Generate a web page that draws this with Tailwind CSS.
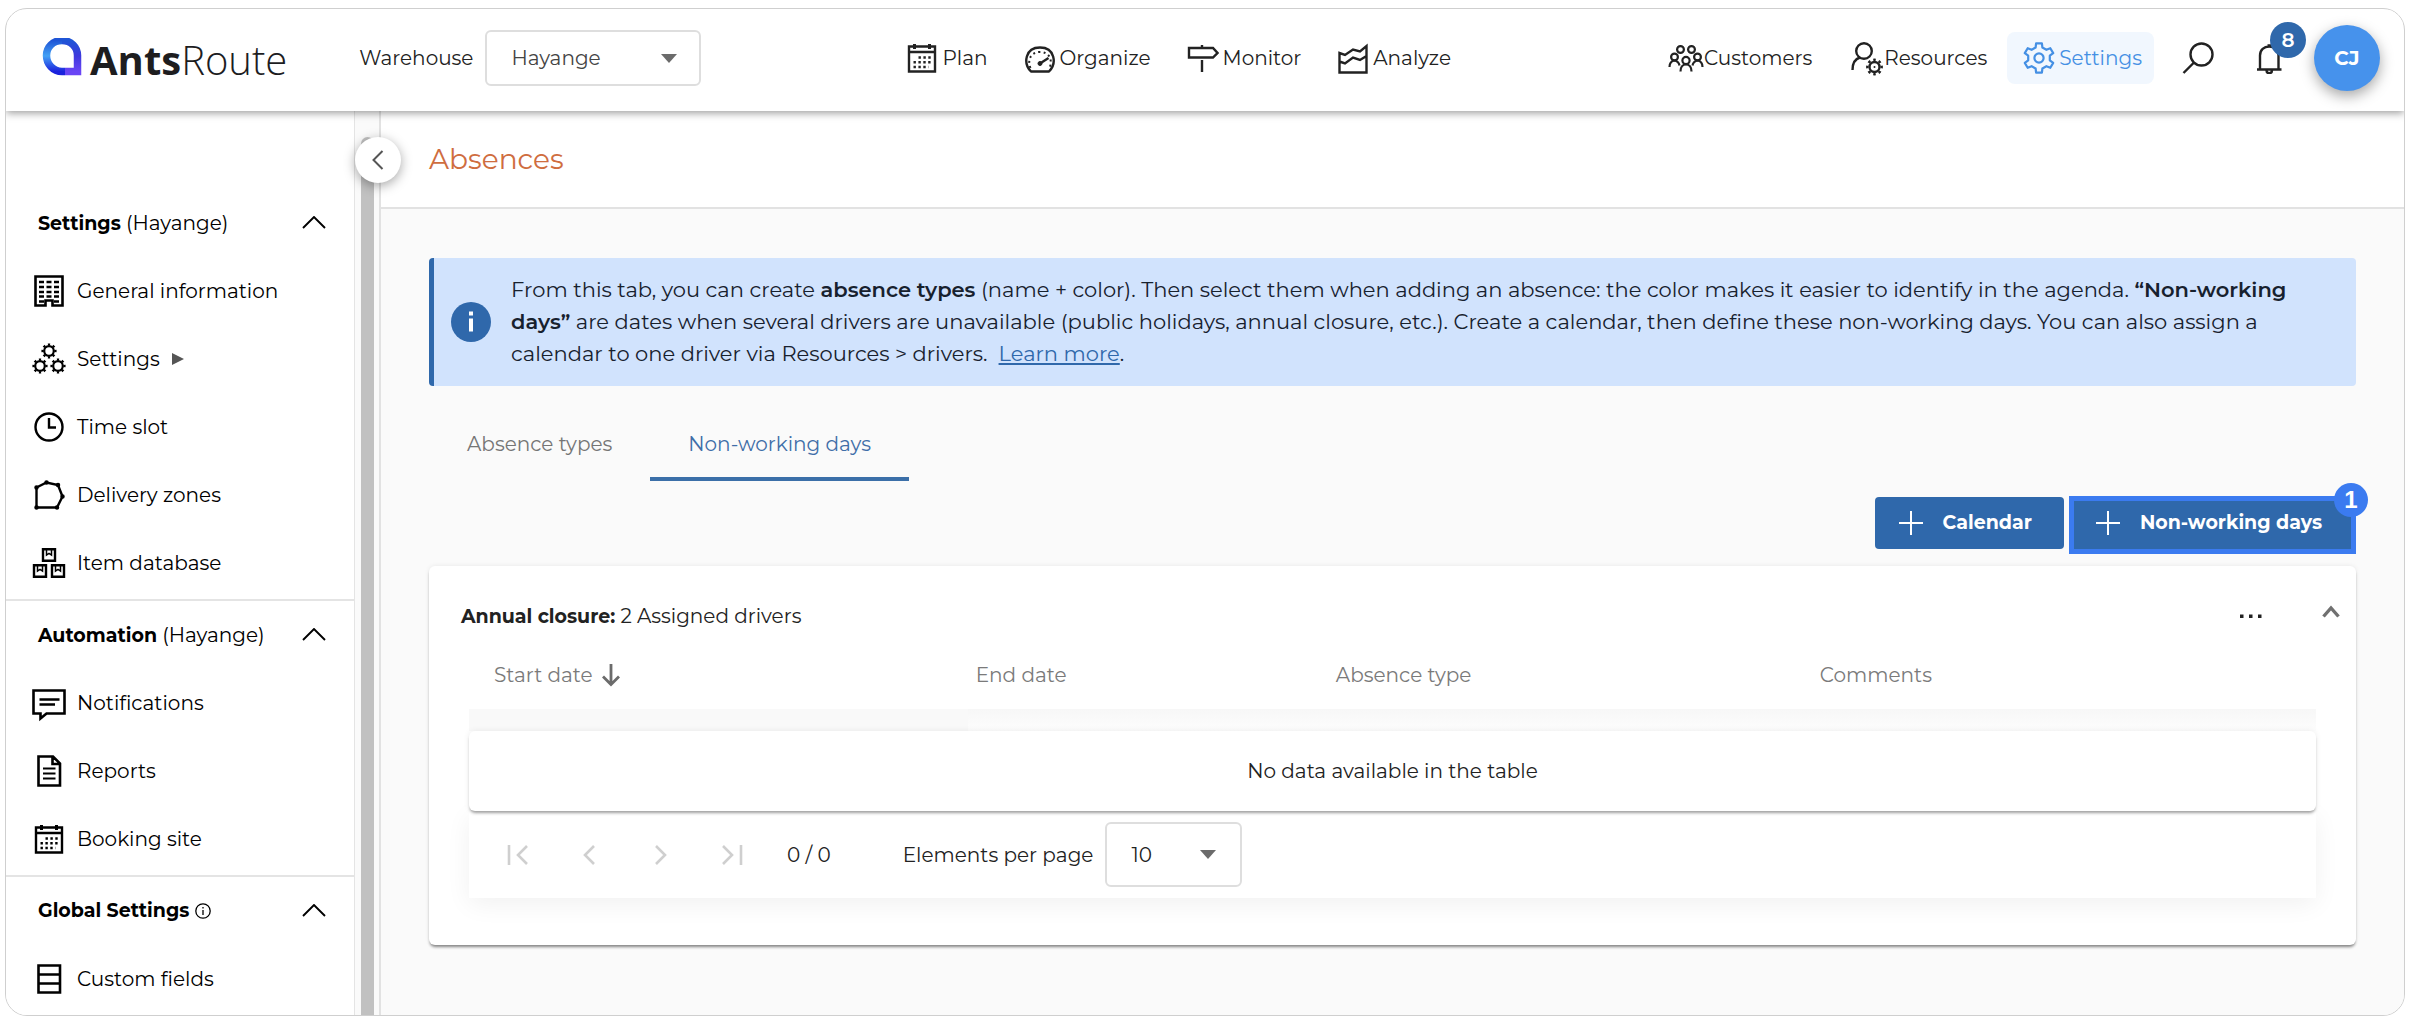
<!DOCTYPE html>
<html lang="en">
  <head>
    <meta charset="utf-8">
    <meta name="viewport" content="width=device-width, initial-scale=1">
    <title>AntsRoute - Absences</title>
    <!-- Tailwind CSS -->
    <script src="https://cdn.jsdelivr.net/npm/@tailwindcss/browser@4"></script>
  </head>
  <body class="bg-white font-['Montserrat','Inter',sans-serif] text-[20px] leading-7 text-[#222]">
    <!-- Shared icons -->
    <svg class="hidden">
      <symbol id="calendar" viewBox="0 0 32 32">
        <path d="M3 4.500H29V29.500H3ZM3 10H29" fill="none" stroke="currentColor" stroke-width="2.400"/>
        <path d="M8.500 2v5M23.500 2v5" stroke="currentColor" stroke-width="3"/>
        <path d="M12.500 15.500H27M7.500 20.300H27M7.500 25H22.500" stroke="currentColor" stroke-width="2.400" stroke-dasharray="2.400 2.500"/>
      </symbol>
      <symbol id="cog" viewBox="0 0 16 16">
        <circle cx="8" cy="8" r="4.800" fill="none" stroke="currentColor" stroke-width="2.200"/>
        <circle cx="8" cy="8" r="6.500" fill="none" stroke="currentColor" stroke-width="2.200" pathLength="16" stroke-dasharray="0.900 1.100" stroke-dashoffset="0.450"/>
      </symbol>
      <symbol id="box" viewBox="0 0 16 16">
        <path d="M2 2.200H14V13.800H2Z" fill="none" stroke="currentColor" stroke-width="2.400"/>
        <path d="M5.500 2.500V8L8 6.300 10.500 8V2.500" fill="none" stroke="currentColor" stroke-width="1.500"/>
      </symbol>
      <symbol id="chevron-up" viewBox="0 0 24 14">
        <path d="M1 12 12 1 23 12" fill="none" stroke="currentColor" stroke-width="1.900"/>
      </symbol>
      <symbol id="caret" viewBox="0 0 16 9">
        <path d="M0 0H16L8 9Z" fill="currentColor"/>
      </symbol>
    </svg>

    <div class="h-screen px-[5px] py-2">
      <div class="flex h-full flex-col overflow-hidden rounded-[22px] border border-[#cfcfcf]">

        <!-- Top bar -->
        <header class="relative z-20 flex h-[102px] shrink-0 items-center justify-between bg-white pr-6 pb-1 pl-9 shadow-[0_2px_8px_rgba(0,0,0,0.4)]">
          <div class="flex items-center">
            <a href="#" class="flex items-center gap-2 font-['Open_Sans',sans-serif] text-[40px] leading-10 text-[#1d1d1f]">
              <svg class="size-10" viewBox="0 3 40 40" fill="none" stroke-width="7.500">
                <defs>
                  <linearGradient id="lg1" x1="0" y1="0" x2="0" y2="1"><stop offset="0" stop-color="#1f55d6"/><stop offset=".5" stop-color="#44a2f5"/><stop offset="1" stop-color="#1b22dd"/></linearGradient>
                  <linearGradient id="lg2" x1="0" y1="0" x2="0" y2="1"><stop offset="0" stop-color="#1f55d6"/><stop offset=".5" stop-color="#3d38dd"/><stop offset="1" stop-color="#6a45f5"/></linearGradient>
                </defs>
                <path d="M20 5.500C11 5.500 4.500 12 4.500 20.500S11 36.500 20 36.500H23" stroke="url(#lg1)"/>
                <path d="M20 5.500C29 5.500 35.500 12 35.500 20.500V36.500H23" stroke="url(#lg2)"/>
              </svg>
              <span class="pt-1"><b>Ants</b><span class="font-light">Route</span></span>
            </a>
            <label for="warehouse" class="ml-18">Warehouse</label>
            <div class="relative ml-3">
              <select id="warehouse" class="h-14 w-[216px] appearance-none rounded-md border-2 border-[#dedede] bg-white pl-6 text-[#444]">
                <option>Hayange</option>
              </select>
              <svg class="pointer-events-none absolute top-6 right-6 h-[9px] w-4 text-[#6b6b6b]"><use href="#caret"/></svg>
            </div>
          </div>

          <nav class="mr-3 flex items-center gap-9">
            <a href="#" class="flex items-center gap-1">
              <svg class="size-8"><use href="#calendar"/></svg>
              Plan
            </a>
            <a href="#" class="flex items-center gap-1">
              <svg class="size-8" viewBox="0 0 32 32" fill="none" stroke="currentColor">
                <path d="M7 29.500C-1 21.500 1 5.500 16 5.500S33 21.500 25 29.500Z" stroke-width="2.400" stroke-linejoin="round"/>
                <path d="M6.500 26C3 17.500 7 10 16 10S29 17.500 25.500 26" stroke-width="2" stroke-dasharray="2 3.200"/>
                <path d="M16 21.500 24.500 16" stroke-width="2.400"/>
                <circle cx="16" cy="21.500" r="2" fill="currentColor"/>
              </svg>
              Organize
            </a>
            <a href="#" class="flex items-center gap-1">
              <svg class="size-8" viewBox="0 0 32 32" fill="none" stroke="currentColor" stroke-width="2.400">
                <path d="M2 6H26L30.500 11 26 15.500H2ZM15 3v3M15 18V30"/>
              </svg>
              Monitor
            </a>
            <a href="#" class="flex items-center gap-1">
              <svg class="size-8" viewBox="0 0 32 32" fill="none" stroke="currentColor" stroke-width="2.400">
                <path d="M2.500 30.500V11L8 13 16 7.500 23 9.500 29.500 4V30.500ZM2.500 19.500 8 21.500 16 15.500 23 18 29.500 14"/>
              </svg>
              Analyze
            </a>
          </nav>

          <div class="flex items-center">
            <a href="#" class="flex items-center">
              <svg class="h-8 w-9" viewBox="0 0 36 32" fill="none" stroke="currentColor" stroke-width="2.200">
                <circle cx="12.500" cy="7.500" r="3.400"/><circle cx="23.500" cy="7.500" r="3.400"/>
                <circle cx="6.500" cy="15" r="3.400"/><circle cx="29.500" cy="15" r="3.400"/>
                <circle cx="18" cy="18.500" r="3.600"/>
                <path d="M1.500 25C1.500 21 3.500 19 6.500 18.500 9 19 11 20.500 11.500 23.500M34.500 25C34.500 21 32.500 19 29.500 18.500 27 19 25 20.500 24.500 23.500M12.500 29.500C12.500 25.500 14.500 22.500 18 22.500S23.500 25.500 23.500 29.500"/>
              </svg>
              Customers
            </a>
            <a href="#" class="ml-9 flex items-center">
              <svg class="size-9" viewBox="0 0 36 36" fill="none" stroke="currentColor" stroke-width="2.400">
                <circle cx="16" cy="11" r="7.800"/>
                <path d="M4.500 30C4.500 24 7 19 12 17.500"/>
                <circle cx="26.500" cy="27" r="5"/>
                <circle cx="26.500" cy="27" r="7.200" pathLength="16" stroke-dasharray="0.900 1.100" stroke-dashoffset="0.450"/>
                <circle cx="26.500" cy="27" r="1" fill="currentColor" stroke="none"/>
              </svg>
              Resources
            </a>
            <a href="#" class="ml-5 flex h-[52px] items-center rounded-lg bg-[#f1f7fe] px-3 text-[#4590e4]">
              <svg class="h-8 w-10" viewBox="-20 -16 40 32" fill="none" stroke="currentColor" stroke-width="2.200" stroke-linejoin="round">
                <path d="M-2.900-14.700H2.900L3.400-10.500 7.400-8.200 11.300-9.800 14.200-4.900 10.800-2.300V2.300L14.200 4.900 11.300 9.800 7.400 8.200 3.400 10.500 2.900 14.700H-2.900L-3.400 10.500-7.400 8.200-11.300 9.800-14.200 4.900-10.800 2.300V-2.300L-14.200-4.900-11.300-9.800-7.400-8.200-3.400-10.500Z"/>
                <circle r="4.600"/>
              </svg>
              Settings
            </a>
            <button type="button" aria-label="Search" class="ml-7">
              <svg class="size-8" viewBox="0 0 32 32" fill="none" stroke="currentColor" stroke-width="2.400">
                <circle cx="19.500" cy="12.500" r="11"/><path d="M12 20.500 1.500 31"/>
              </svg>
            </button>
            <button type="button" aria-label="Notifications" class="relative ml-10">
              <svg class="size-8" viewBox="0 0 32 32" fill="none" stroke="currentColor" stroke-width="2.400">
                <path d="M3 27.500H27.500M6 27V13.500C6 8 10 4.500 15.200 4.500S24.500 8 24.500 13.500V27M12.500 28.500C12.500 32 18 32 18 28.500M13.500 3.500H17"/>
              </svg>
              <span class="absolute -top-5 left-4 flex size-9 items-center justify-center rounded-full bg-[#2f68ab] font-semibold text-white">8</span>
            </button>
            <button type="button" class="ml-7 flex size-[66px] items-center justify-center rounded-full bg-[#4692ec] font-bold text-white shadow-[0_5px_14px_rgba(0,0,0,0.35)]">CJ</button>
          </div>
        </header>

        <div class="relative flex min-h-0 flex-1">
          <!-- Sidebar -->
          <aside class="w-[349px] shrink-0 overflow-hidden border-r border-[#e4e4e4] bg-white pt-[78px] text-black">
            <section class="border-b-2 border-[#e4e4e4] pb-0.5">
              <h2 class="flex h-[68px] items-center justify-between pr-7 pl-8">
                <span><b class="text-[19px] font-bold">Settings</b> (Hayange)</span>
                <button type="button" aria-label="Collapse Settings"><svg class="h-3.5 w-6"><use href="#chevron-up"/></svg></button>
              </h2>
              <a href="#" class="flex h-[68px] items-center gap-3 pl-[27px]">
                <svg class="size-8" viewBox="0 0 32 32" fill="none" stroke="currentColor">
                  <path d="M2.500 1.500H29.500V30.500H19.500V25.500H12.500V30.500H2.500Z" stroke-width="2.600"/>
                  <path d="M6 7H27M6 12H27M6 17H27M6 21.500H27M6 26.500H11M21 26.500H27" stroke-width="2.400" stroke-dasharray="5 2.500"/>
                </svg>
                General information
              </a>
              <a href="#" class="flex h-[68px] items-center gap-3 pl-[27px]">
                <svg class="size-8 overflow-visible" viewBox="0 0 32 32">
                  <use href="#cog" x="8" y="0" width="16" height="16"/>
                  <use href="#cog" x="-1" y="15" width="16" height="16"/>
                  <use href="#cog" x="17" y="15" width="16" height="16"/>
                </svg>
                Settings
                <svg class="h-3 w-3 text-[#555]" viewBox="0 0 12 12"><path d="M0 0 12 6 0 12Z" fill="currentColor"/></svg>
              </a>
              <a href="#" class="flex h-[68px] items-center gap-3 pl-[27px]">
                <svg class="size-8" viewBox="0 0 32 32" fill="none" stroke="currentColor" stroke-width="2.400">
                  <circle cx="16" cy="16" r="13.500"/><path d="M16 7V16.500H23"/>
                </svg>
                Time slot
              </a>
              <a href="#" class="flex h-[68px] items-center gap-3 pl-[27px]">
                <svg class="size-8" viewBox="0 0 32 32" fill="none" stroke="currentColor" stroke-width="2.400">
                  <path d="M3.500 8.500 13.500 3.500 25 6 29.500 17.500 24 28.500H3.500Z"/>
                  <path d="M3.500 8.500h0M13.500 3.500h0M25 6h0M29.500 17.500h0M24 28.500h0M3.500 28.500h0" stroke-width="4.500" stroke-linecap="round"/>
                </svg>
                Delivery zones
              </a>
              <a href="#" class="flex h-[68px] items-center gap-3 pl-[27px]">
                <svg class="size-8 overflow-visible" viewBox="0 0 32 32">
                  <use href="#box" x="8" y="0" width="16" height="16"/>
                  <use href="#box" x="-1" y="16" width="16" height="16"/>
                  <use href="#box" x="17" y="16" width="16" height="16"/>
                </svg>
                Item database
              </a>
            </section>

            <section class="border-b-2 border-[#e4e4e4] pb-0.5">
              <h2 class="flex h-[68px] items-center justify-between pr-7 pl-8">
                <span><b class="text-[19px] font-bold">Automation</b> (Hayange)</span>
                <button type="button" aria-label="Collapse Automation"><svg class="h-3.5 w-6"><use href="#chevron-up"/></svg></button>
              </h2>
              <a href="#" class="flex h-[68px] items-center gap-3 pl-[27px]">
                <svg class="size-8 overflow-visible" viewBox="0 0 32 32" fill="none" stroke="currentColor" stroke-width="2.600">
                  <path d="M0.500 3.500H31.500V26.500H13.500L7.500 31.500V26.500H0.500ZM6.500 12.500H26.500M6.500 17.500H22"/>
                </svg>
                Notifications
              </a>
              <a href="#" class="flex h-[68px] items-center gap-3 pl-[27px]">
                <svg class="size-8" viewBox="0 0 32 32" fill="none" stroke="currentColor" stroke-width="2.600">
                  <path d="M5.500 1.500H20L27 8.500V30.500H5.500ZM19.500 2V9H27"/>
                  <path d="M10 13.500H22.500M10 18.500H22.500M10 23.500H22.500" stroke-width="2.200"/>
                </svg>
                Reports
              </a>
              <a href="#" class="flex h-[68px] items-center gap-3 pl-[27px]">
                <svg class="size-8"><use href="#calendar"/></svg>
                Booking site
              </a>
            </section>

            <section>
              <h2 class="flex h-[68px] items-center justify-between pr-7 pl-8">
                <span class="flex items-center gap-1.5">
                  <b class="text-[19px] font-bold">Global Settings</b>
                  <svg class="size-4" viewBox="0 0 16 16" fill="none" stroke="currentColor" stroke-width="1.300"><circle cx="8" cy="8" r="7.200"/><path d="M8 7V12M8 4V5.500"/></svg>
                </span>
                <button type="button" aria-label="Collapse Global Settings"><svg class="h-3.5 w-6"><use href="#chevron-up"/></svg></button>
              </h2>
              <a href="#" class="flex h-[68px] items-center gap-3 pl-[27px]">
                <svg class="size-8" viewBox="0 0 32 32" fill="none" stroke="currentColor" stroke-width="2.600">
                  <path d="M5.500 2.500H27V29.500H5.500ZM5.500 11.500H27M5.500 20.500H27"/>
                </svg>
                Custom fields
              </a>
            </section>
          </aside>

          <!-- Scrollbar and collapse button -->
          <div class="relative w-[26px] shrink-0 border-r-2 border-[#e2e2e2] bg-[#fafafa] pt-[26px] pr-[5px] pl-1.5">
            <div class="h-full rounded-t-full bg-[#c1c1c1]"></div>
            <button type="button" aria-label="Collapse menu" class="absolute top-[26px] left-0 z-10 flex size-[46px] items-center justify-center rounded-full bg-white text-[#555] shadow-[0_3px_12px_rgba(0,0,0,0.35)]">
              <svg class="h-5 w-3" viewBox="0 0 12 20" fill="none" stroke="currentColor" stroke-width="2"><path d="M10.500 1 1.500 10 10.500 19"/></svg>
            </button>
          </div>

          <!-- Page content -->
          <main class="min-w-0 flex-1 bg-[#fafafa]">
            <div class="flex h-[98px] items-center border-b-2 border-[#e2e2e2] bg-white pl-12">
              <h1 class="text-[28px] text-[#cf6d3f]">Absences</h1>
            </div>

            <div class="pt-[49px] pr-12 pl-12">
              <!-- Info banner -->
              <div class="flex items-center gap-5 rounded-sm border-l-[5px] border-[#2f68ab] bg-[#d1e3fd] py-4 pr-4 pl-[17px]">
                <svg class="size-10 shrink-0" viewBox="0 0 40 40">
                  <circle cx="20" cy="20" r="20" fill="#2f68ab"/>
                  <path d="M18 16.500H22V29.500H18ZM18 9.500H22V13.500H18Z" fill="#fff"/>
                </svg>
                <p class="text-[21px] leading-8 text-[#17212e]">
                  From this tab, you can create <b class="font-semibold">absence types</b> (name + color). Then select them when adding an absence: the color makes it easier to identify in the agenda. <b class="font-semibold">“Non-working days”</b> are dates when several drivers are unavailable (public holidays, annual closure, etc.). Create a calendar, then define these non-working days. You can also assign a calendar to one driver via Resources &gt; drivers. &nbsp;<a href="#" class="text-[#2f68ab] underline underline-offset-2">Learn more</a>.
                </p>
              </div>

              <!-- Tabs -->
              <div class="mt-[25px] flex" role="tablist">
                <button type="button" role="tab" class="h-[70px] border-b-4 border-transparent px-[38px] text-[#757575]">Absence types</button>
                <button type="button" role="tab" aria-selected="true" class="h-[70px] border-b-4 border-[#3b6fa8] px-[38px] text-[#3f6ea8]">Non-working days</button>
              </div>

              <!-- Actions -->
              <div class="mt-4 flex justify-end gap-[5px] text-[19px] font-bold text-white">
                <button type="button" class="flex h-[52px] items-center gap-5 rounded-sm bg-[#2f68ab] pr-8 pl-6">
                  <svg class="size-6" viewBox="0 0 24 24" stroke="currentColor" stroke-width="2"><path d="M12 0V24M0 12H24"/></svg>
                  Calendar
                </button>
                <div class="relative">
                  <button type="button" class="flex h-[52px] items-center gap-5 bg-[#2f68ab] pr-[34px] pl-[27px]">
                    <svg class="size-6" viewBox="0 0 24 24" stroke="currentColor" stroke-width="2"><path d="M12 0V24M0 12H24"/></svg>
                    Non-working days
                  </button>
                  <!-- Step highlight -->
                  <div class="pointer-events-none absolute inset-x-0 -top-px -bottom-[5px] border-[5px] border-[#3b7bf0]"></div>
                  <span class="absolute -top-3.5 -right-3 flex size-[34px] items-center justify-center rounded-full bg-[#3b7bf0] font-['Liberation_Sans',sans-serif] text-[24px] font-bold">1</span>
                </div>
              </div>

              <!-- Calendar card -->
              <section class="mt-[17px] rounded-md bg-white pr-10 pb-[47px] pl-10 shadow-[0_3px_3px_-1px_rgba(0,0,0,0.45),0_0_5px_rgba(0,0,0,0.08)]">
                <div class="-mr-6 -ml-2 flex h-[74px] items-center pt-[26px]">
                  <h2><b class="text-[19px] font-bold">Annual closure:</b> 2 Assigned drivers</h2>
                  <button type="button" aria-label="More" class="ml-auto"><svg class="h-6 w-6" viewBox="0 0 24 24"><path d="M2 10.500H5.500V14H2ZM11 10.500H14.500V14H11ZM20 10.500H23.500V14H20Z" fill="#222"/></svg></button>
                  <button type="button" aria-label="Collapse" class="ml-[60px]"><svg class="h-6 w-[18px] text-[#707070]" viewBox="0 0 18 24" fill="none" stroke="currentColor" stroke-width="3.400"><path d="M1.500 12.500 9 4 16.500 12.500"/></svg></button>
                </div>

                <table class="relative z-10 w-full table-fixed border-separate border-spacing-0">
                  <thead class="text-left text-[#7a7a7a]">
                    <tr class="h-[69px]">
                      <th class="w-[27%] pl-[25px] font-normal">
                        <button type="button" class="flex items-center gap-2">
                          Start date
                          <svg class="h-6 w-5" viewBox="0 0 20 24" fill="none" stroke="#6b6b6b" stroke-width="2.800"><path d="M10 1V21M2 13.500 10 21.500 18 13.500"/></svg>
                        </button>
                      </th>
                      <th class="w-[19.500%] pl-2 font-normal">End date</th>
                      <th class="w-[26.200%] pl-2 font-normal">Absence type</th>
                      <th class="pl-2 font-normal">Comments</th>
                    </tr>
                    <tr class="h-[22px]">
                      <td class="bg-[#f9f9f9]"></td>
                      <td colspan="3" class="bg-linear-to-b from-[#f7f7f7] to-[#fdfdfd]"></td>
                    </tr>
                  </thead>
                  <tbody>
                    <tr class="h-20">
                      <td colspan="4" class="rounded-md bg-white text-center shadow-[0_3px_3px_-1px_rgba(0,0,0,0.35),0_0_6px_rgba(0,0,0,0.08)]">No data available in the table</td>
                    </tr>
                  </tbody>
                </table>

                <!-- Pagination -->
                <div class="flex h-[87px] items-center bg-white pl-[38px] shadow-[0_6px_24px_rgba(0,0,0,0.06)]">
                  <div class="flex items-center text-[#cfcfcf]">
                    <button type="button" disabled aria-label="First page"><svg class="h-5 w-[22px]" viewBox="0 0 22 20" fill="none" stroke="currentColor" stroke-width="2.600"><path d="M2 0V20M20 1 11 10 20 19"/></svg></button>
                    <button type="button" disabled aria-label="Previous page" class="ml-[54px]"><svg class="h-5 w-3" viewBox="0 0 12 20" fill="none" stroke="currentColor" stroke-width="2.600"><path d="M11 1 2 10 11 19"/></svg></button>
                    <button type="button" disabled aria-label="Next page" class="ml-[60px]"><svg class="h-5 w-3" viewBox="0 0 12 20" fill="none" stroke="currentColor" stroke-width="2.600"><path d="M1 1 10 10 1 19"/></svg></button>
                    <button type="button" disabled aria-label="Last page" class="ml-[54px]"><svg class="h-5 w-[22px]" viewBox="0 0 22 20" fill="none" stroke="currentColor" stroke-width="2.600"><path d="M2 1 11 10 2 19M20 0V20"/></svg></button>
                  </div>
                  <span class="ml-11">0 / 0</span>
                  <label for="page-size" class="ml-[72px]">Elements per page</label>
                  <div class="relative ml-3">
                    <select id="page-size" class="h-[65px] w-[137px] appearance-none rounded-md border-2 border-[#dedede] bg-white pl-6">
                      <option>10</option>
                    </select>
                    <svg class="pointer-events-none absolute top-7 right-[26px] h-[9px] w-4 text-[#6b6b6b]"><use href="#caret"/></svg>
                  </div>
                </div>
              </section>
            </div>
          </main>
        </div>
      </div>
    </div>
  </body>
</html>
